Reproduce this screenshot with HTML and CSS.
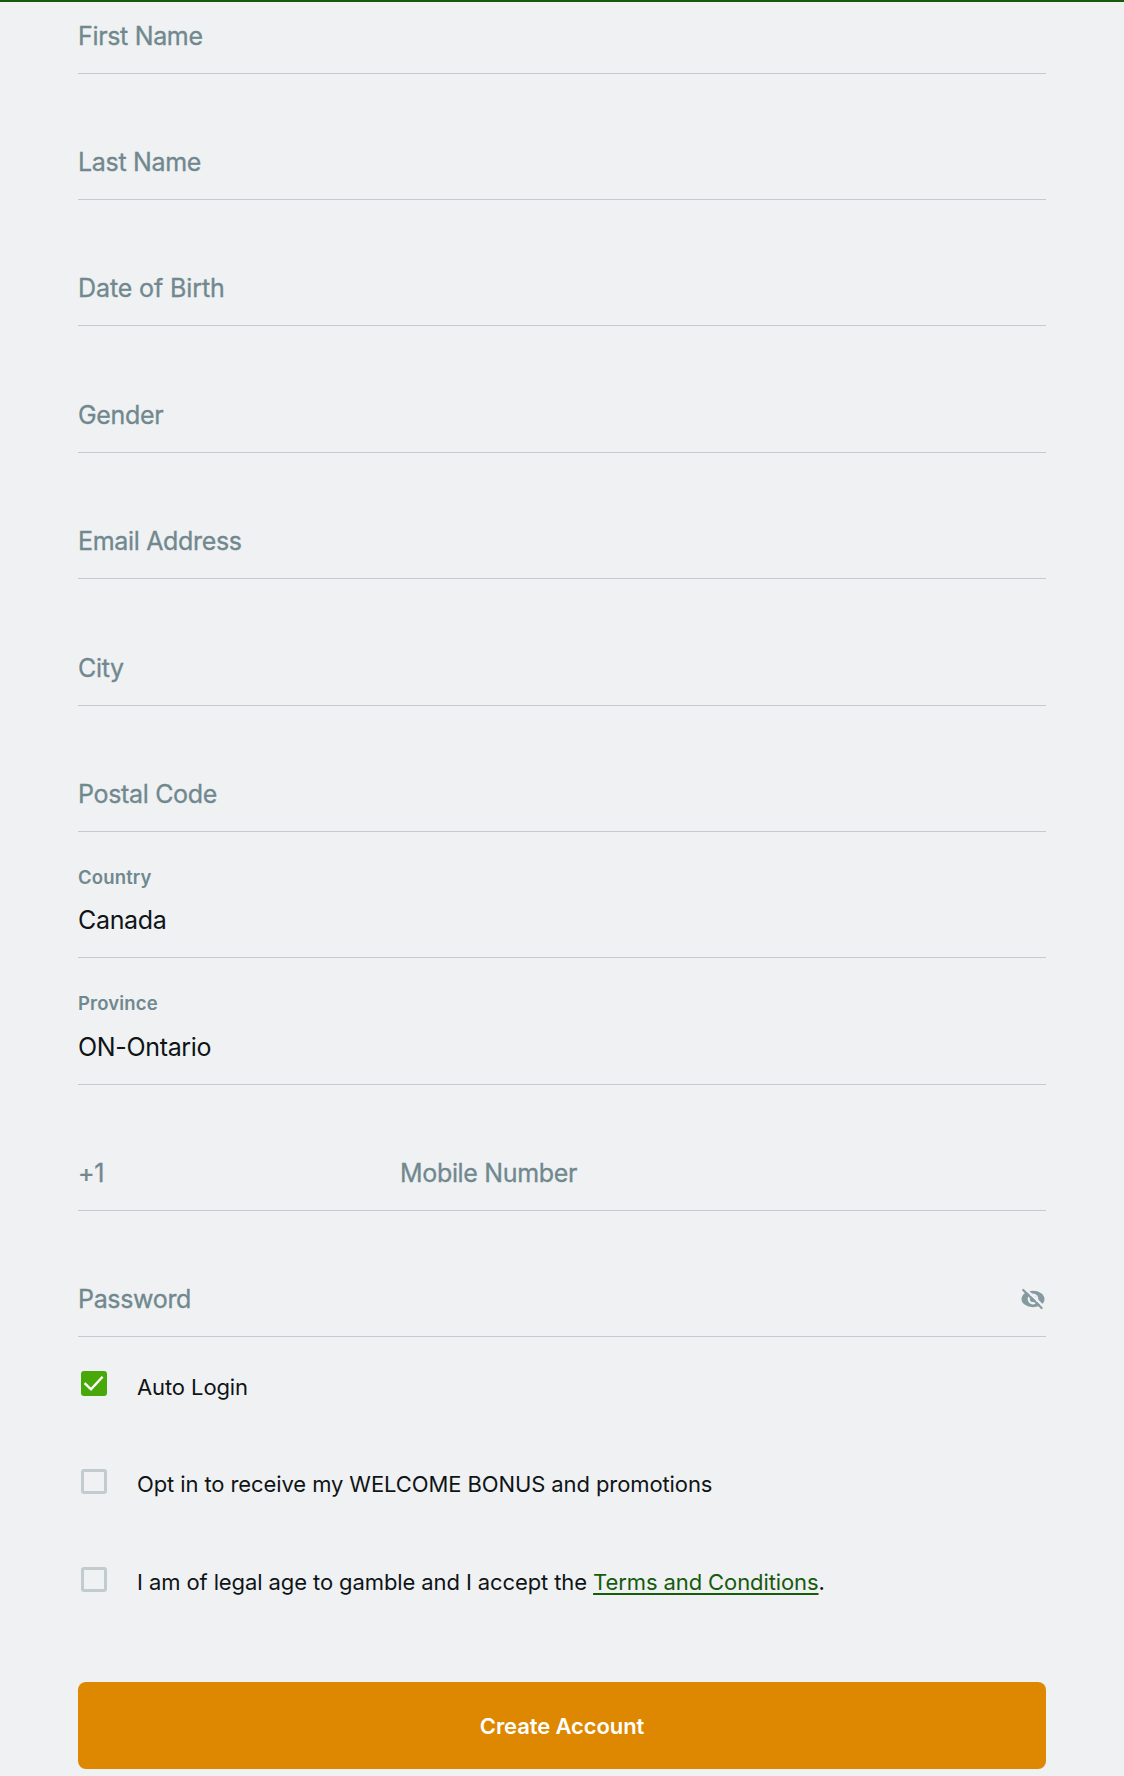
FILE: index.html
```
<!DOCTYPE html>
<html lang="en">
<head>
  <meta charset="utf-8">
  <title>Create Account</title>
  <link rel="stylesheet" href="styles.css">
</head>
<body>
  <form class="signup">
    <div class="field first"><span class="placeholder">First Name</span></div>
    <div class="field"><span class="placeholder">Last Name</span></div>
    <div class="field"><span class="placeholder birth">Date of Birth</span></div>
    <div class="field"><span class="placeholder">Gender</span></div>
    <div class="field"><span class="placeholder">Email Address</span></div>
    <div class="field"><span class="placeholder">City</span></div>
    <div class="field"><span class="placeholder">Postal Code</span></div>
    <div class="field">
      <span class="label">Country</span>
      <span class="value">Canada</span>
    </div>
    <div class="field">
      <span class="label">Province</span>
      <span class="value">ON-Ontario</span>
    </div>
    <div class="field">
      <div class="phone">
        <span class="placeholder">+1</span>
        <span class="placeholder">Mobile Number</span>
      </div>
    </div>
    <div class="field">
      <div class="password">
        <span class="placeholder">Password</span>
        <svg class="eye" viewBox="0 0 24 20">
          <ellipse cx="12" cy="10" rx="11.5" ry="8.2" fill="#849a9f"/>
          <circle cx="12" cy="10" r="5.4" fill="#eff1f3"/>
          <circle cx="12" cy="10" r="3.1" fill="#849a9f"/>
          <path d="M3.6-.8 22.4 17.4" stroke="#eff1f3" stroke-width="2.4"/>
          <path d="M2.2 1 20.6 19" stroke="#849a9f" stroke-width="2.2" stroke-linecap="round"/>
        </svg>
      </div>
    </div>

    <div class="checks">
      <div class="check">
        <span class="box checked">
          <svg viewBox="0 0 25 25"><path d="M3.6 12.2 10 18.4 21.6 5.8" fill="none" stroke="#fff" stroke-width="2.4"/></svg>
        </span>
        <span class="text">Auto Login</span>
      </div>
      <div class="check">
        <span class="box"></span>
        <span class="text">Opt in to receive my WELCOME BONUS and promotions</span>
      </div>
      <div class="check">
        <span class="box"></span>
        <span class="text">I am of legal age to gamble and I accept the <a href="#">Terms and Conditions</a>.</span>
      </div>
    </div>

    <button type="button" class="submit">Create Account</button>
  </form>
</body>
</html>
```
FILE: styles.css
```
:root {
  --background: #eff1f3;
  --text: #0f1416;
  --text-secondary: #70888e;
  --line: #c2cccf;
  --green: #165a0c;
  --check: #48a80a;
  --orange: #de8700;
}

* {
  margin: 0;
  padding: 0;
  box-sizing: border-box;
}

body {
  font-family: 'Inter', sans-serif;
  background: var(--background);
  color: var(--text);
  border-top: 2px solid var(--green);
  height: 1776px;
  overflow: hidden;
}

.signup {
  width: 968px;
  margin: 0 78px;
}

.field {
  height: 126.37px;
  padding-bottom: 22px;
  border-bottom: 1px solid var(--line);
  display: flex;
  flex-direction: column;
  justify-content: flex-end;
}

.field.first {
  height: 71.73px;
}

.placeholder,
.value {
  font-size: 25px;
  line-height: 30px;
  letter-spacing: -0.33px;
}

.placeholder {
  color: var(--text-secondary);
  -webkit-text-stroke: 0.3px var(--text-secondary);
}

.placeholder.birth {
  letter-spacing: -0.1px;
}

.label {
  font-size: 18.5px;
  font-weight: 600;
  line-height: 22px;
  letter-spacing: 0.15px;
  margin-bottom: 17.3px;
  color: var(--text-secondary);
}

.phone {
  display: grid;
  grid-template-columns: 322px 1fr;
}

.password {
  display: flex;
  justify-content: space-between;
  align-items: center;
}

.eye {
  width: 24px;
  height: 20px;
  margin-right: 1px;
  overflow: visible;
}

.checks {
  padding: 34px 0 0 3px;
}

.check {
  display: flex;
  gap: 30px;
  height: 98px;
}

.box {
  width: 26px;
  height: 25px;
  border: 3px solid var(--line);
  border-radius: 3px;
  flex-shrink: 0;
}

.box.checked {
  border: none;
  background: var(--check);
}

.box svg {
  display: block;
  height: 25px;
}

.text {
  font-size: 22px;
  line-height: 26px;
  letter-spacing: -0.1px;
  padding-top: 2px;
}

.box.checked + .text {
  padding-top: 3px;
}

.text a {
  color: var(--green);
  text-decoration-thickness: 2px;
  text-underline-offset: 3px;
}

.submit {
  display: block;
  width: 100%;
  height: 87px;
  margin-top: 17px;
  border: none;
  border-radius: 8px;
  background: var(--orange);
  color: #fff;
  font-family: inherit;
  font-size: 22px;
  font-weight: 600;
  letter-spacing: -0.1px;
}
```
